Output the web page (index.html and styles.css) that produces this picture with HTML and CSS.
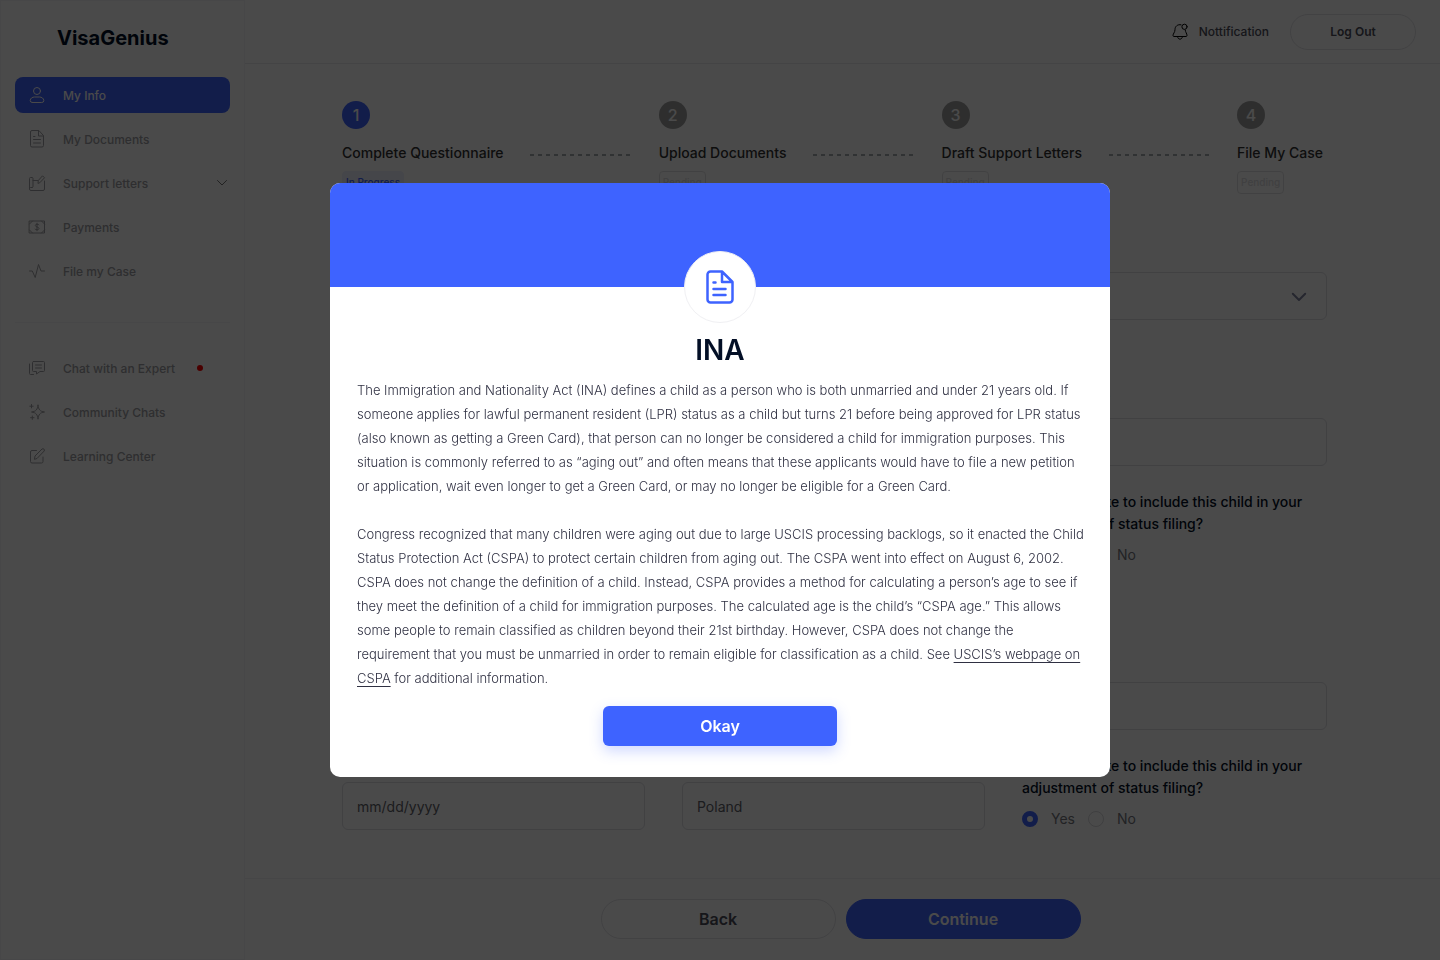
FILE: index.html
```html
<!DOCTYPE html>
<html lang="en">
<head>
<meta charset="utf-8">
<meta name="viewport" content="width=device-width, initial-scale=1">
<title>VisaGenius</title>
<link rel="stylesheet" href="styles.css">
</head>
<body>
<div class="app">
  <aside class="sidebar">
    <div class="brand">VisaGenius</div>
    <nav class="nav">
      <a class="nav-item active" href="#"><svg class="icon" viewBox="0 0 16 16"><circle cx="8" cy="4" r="3.5"/><path d="M3.3 15.5h9.4a2 2 0 0 0 2.1-2c0-2.200-2.300-3.500-4.300-3.500h-5C3.500 10 1.200 11.300 1.200 13.500a2 2 0 0 0 2.100 2z"/></svg>My Info</a>
      <a class="nav-item" href="#"><svg class="icon" viewBox="0 0 16 16"><path d="M9.500-.5H3A1.500 1.500 0 0 0 1.500 1v13.500A1.500 1.500 0 0 0 3 16h10a1.500 1.500 0 0 0 1.500-1.500V5zM9.500-.5V5h5M4.500 5.500h1.500M4.500 8.500h7M4.500 12h7"/></svg>My Documents</a>
      <a class="nav-item" href="#"><svg class="icon" viewBox="0 0 16 16"><path d="M3 12.500H1.500a1 1 0 0 1-1-1V3.500a1 1 0 0 1 1-1H3a1 1 0 0 1 1 1v8a1 1 0 0 1-1 1zM.5 11.500V14A1.500 1.500 0 0 0 2 15.500h12a1.500 1.500 0 0 0 1.500-1.500V6M4 5.500h5M9 8l.3-2.500L13.500.8l2 2-4.500 4.700z"/></svg>Support letters<svg class="chevron" viewBox="0 0 10 6"><path d="M.5.5 5 5 9.500.5"/></svg></a>
      <a class="nav-item" href="#"><svg class="icon" viewBox="0 0 16 16"><path d="M.5 2h15v12H.5zM.5 5 3.500 2M12.500 2l3 3M.5 11l3 3M12.500 14l3-3M10 5.800C9.500 5 6.300 4.800 6.300 6.500S10 7.800 10 9.500 6.500 11 6 10.200M8 4.200v7.600"/></svg>Payments</a>
      <a class="nav-item" href="#"><svg class="icon" viewBox="0 0 16 16"><path d="M.5 8h2.800l2.900 6.500L9.500 1.500l2.500 6.500h3.500"/></svg>File my Case</a>
    </nav>
    <hr class="divider">
    <nav class="nav">
      <a class="nav-item" href="#"><svg class="icon" viewBox="0 0 16 16"><path d="M4.500 1.500h10a1 1 0 0 1 1 1v8a1 1 0 0 1-1 1H11L7.500 14v-2.500h-3a1 1 0 0 1-1-1v-8a1 1 0 0 1 1-1zM.5 4v9.500a1 1 0 0 0 1 1h3M6.500 5h6M6.500 8h6"/></svg>Chat with an Expert<span class="dot"></span></a>
      <a class="nav-item" href="#"><svg class="icon" viewBox="0 0 16 16"><path d="M9 1.200C9.500 5.500 11 7.500 15.500 8 11 8.500 9.500 10.500 9 15.200 8.500 10.500 7 8.500 2.500 8 7 7.500 8.500 5.500 9 1.200zM2.500.5v3.400M.8 2.200h3.400M3.300 12v3.400M1.600 13.700H5"/></svg>Community Chats</a>
      <a class="nav-item" href="#"><svg class="icon" viewBox="0 0 16 16"><path d="M7.500 2.500H3A1.500 1.500 0 0 0 1.500 4v9.500A1.500 1.500 0 0 0 3 15h9.500a1.500 1.500 0 0 0 1.500-1.500V9M5.500 11l.5-3L13 1c1.300-1 3.200.7 2.200 2L8.300 10.200z"/></svg>Learning Center</a>
    </nav>
  </aside>

  <div class="page">
    <header class="topbar">
      <a class="notify" href="#"><svg class="bell" viewBox="0 0 16 18"><path d="M9 1.800C5.500 1 3 3.500 3 6.500 3 9.500 1 10.500 1 12.500c0 .700.500 1 1 1h12c.500 0 1-.300 1-1 0-2-1.500-3-1.800-5.500M5.500 13.500c.3 3.700 4.700 3.700 5 0"/><circle cx="12.500" cy="3.800" r="2.600"/></svg>Nottification</a>
      <button class="logout" type="button">Log Out</button>
    </header>

    <main class="content">
      <ol class="steps">
        <li class="step current"><span class="num">1</span><span class="step-name">Complete Questionnaire</span><span class="badge">In Progress</span></li>
        <li class="link"></li>
        <li class="step"><span class="num">2</span><span class="step-name">Upload Documents</span><span class="badge">Pending</span></li>
        <li class="link"></li>
        <li class="step"><span class="num">3</span><span class="step-name">Draft Support Letters</span><span class="badge">Pending</span></li>
        <li class="link"></li>
        <li class="step"><span class="num">4</span><span class="step-name">File My Case</span><span class="badge">Pending</span></li>
      </ol>

      <form class="form">
        <div class="field">
          <label class="label" for="count">Number of children</label>
          <div class="select-wrap">
            <select class="input" id="count"><option>2</option></select>
            <svg class="select-arrow" viewBox="0 0 14 8"><path d="M.8.8 7 7 13.200.8"/></svg>
          </div>
        </div>

        <fieldset class="child">
          <legend class="legend">Child 1</legend>
          <div class="field"><label class="label" for="f1">First Name</label><input class="input" id="f1"></div>
          <div class="field"><label class="label" for="m1">Last Name</label><input class="input" id="m1"></div>
          <div class="field"><label class="label" for="l1">Middle Name</label><input class="input" id="l1"></div>
          <div class="field"><label class="label" for="d1">Date of Birth</label><input class="input" id="d1" placeholder="mm/dd/yyyy"></div>
          <div class="field"><label class="label" for="c1">Country of Birth</label><input class="input" id="c1" placeholder="Poland"></div>
          <div class="question" role="radiogroup" aria-labelledby="q1">
            <span class="label" id="q1">Would you like to include this child in your adjustment of status filing?</span>
            <div class="choices"><label class="choice"><input class="radio" type="radio" name="include1" checked>Yes</label><label class="choice"><input class="radio" type="radio" name="include1">No</label></div>
          </div>
        </fieldset>

        <fieldset class="child">
          <legend class="legend">Child 2</legend>
          <div class="field"><label class="label" for="f2">First Name</label><input class="input" id="f2"></div>
          <div class="field"><label class="label" for="m2">Last Name</label><input class="input" id="m2"></div>
          <div class="field"><label class="label" for="l2">Middle Name</label><input class="input" id="l2"></div>
          <div class="field"><label class="label" for="d2">Date of Birth</label><input class="input" id="d2" placeholder="mm/dd/yyyy"></div>
          <div class="field"><label class="label" for="c2">Country of Birth</label><input class="input" id="c2" placeholder="Poland"></div>
          <div class="question" role="radiogroup" aria-labelledby="q2">
            <span class="label" id="q2">Would you like to include this child in your adjustment of status filing?</span>
            <div class="choices"><label class="choice"><input class="radio" type="radio" name="include2" checked>Yes</label><label class="choice"><input class="radio" type="radio" name="include2">No</label></div>
          </div>
        </fieldset>
      </form>
    </main>

    <footer class="footer">
      <button class="pill" type="button">Back</button>
      <button class="pill primary" type="button">Continue</button>
    </footer>
  </div>
</div>

<div class="overlay">
  <section class="dialog" role="dialog" aria-modal="true" aria-labelledby="dialog-title">
    <div class="dialog-banner">
      <span class="dialog-badge"><svg class="dialog-icon" viewBox="0 0 28 34"><path d="M16 1.500H4.500a3 3 0 0 0-3 3v25a3 3 0 0 0 3 3h19a3 3 0 0 0 3-3V12zM16 1.500V12h10.500M7.500 12.500h2M7.500 19h12M7.500 25h12"/></svg></span>
    </div>
    <div class="dialog-body">
      <h1 class="dialog-title" id="dialog-title">INA</h1>
      <div class="copy">
        <p class="text">The Immigration and Nationality Act (INA) defines a child as a person who is both unmarried and under 21 years old. If someone applies for lawful permanent resident (LPR) status as a child but turns 21 before being approved for LPR status (also known as getting a Green Card), that person can no longer be considered a child for immigration purposes. This situation is commonly referred to as “aging out” and often means that these applicants would have to file a new petition or application, wait even longer to get a Green Card, or may no longer be eligible for a Green Card.</p>
        <p class="text">Congress recognized that many children were aging out due to large USCIS processing backlogs, so it enacted the Child Status Protection Act (CSPA) to protect certain children from aging out. The CSPA went into effect on August 6, 2002. CSPA does not change the definition of a child. Instead, CSPA provides a method for calculating a person’s age to see if they meet the definition of a child for immigration purposes. The calculated age is the child’s “CSPA age.” This allows some people to remain classified as children beyond their 21st birthday. However, CSPA does not change the requirement that you must be unmarried in order to remain eligible for classification as a child. See <a class="text-link" href="#">USCIS’s webpage on CSPA</a> for additional information.</p>
      </div>
      <button class="okay" type="button">Okay</button>
    </div>
  </section>
</div>
</body>
</html>
```
FILE: styles.css
```css
* { box-sizing: border-box; }
body { margin: 0; font-family: Inter, "Liberation Sans", sans-serif; color: #030f26; background: #fff; }
button, input, select { font-family: inherit; }
svg { fill: none; stroke: currentColor; stroke-linecap: round; stroke-linejoin: round; flex: none; overflow: visible; }

.app { display: flex; min-height: 100vh; }
.sidebar { width: 245px; flex: none; padding: 20px 14px; border: 1px solid #f3f3f6; }
.brand { margin: 0 0 21px 42px; font-size: 20px; line-height: 35px; font-weight: 700; }
.nav { display: flex; flex-direction: column; gap: 8px; }
.nav-item { display: flex; align-items: center; height: 36px; padding: 0 3px 0 14px; border-radius: 8px; color: #a0a0a4; font-size: 12px; font-weight: 500; text-decoration: none; }
.nav-item.active { background: #3e63ff; color: #fff; }
.icon { width: 16px; height: 16px; margin-right: 18px; }
.chevron { width: 10px; height: 6px; margin-left: auto; stroke: #777; }
.dot { width: 6px; height: 6px; margin-left: 22px; border-radius: 50%; background: #f00; }
.divider { height: 1px; margin: 33px 0 27px; border: 0; background: #f3f3f6; }

.page { flex: 1; min-width: 0; display: flex; flex-direction: column; }
.topbar { display: flex; align-items: center; justify-content: flex-end; gap: 21px; height: 64px; padding-right: 24px; border-bottom: 1px solid #eaeaee; }
.notify { display: flex; align-items: center; gap: 11px; color: #4c4d59; font-size: 12px; font-weight: 500; text-decoration: none; }
.bell { width: 16px; height: 18px; color: #000; }
.logout { width: 126px; height: 36px; border: 1px solid #e2e2e6; border-radius: 18px; background: #fff; color: #4c4d59; font-size: 12px; font-weight: 600; }

.content { flex: 1; padding: 37px 113px 0 97px; }
.steps { display: flex; justify-content: space-between; margin: 0; padding: 0 4px 0 0; list-style: none; }
.step { display: flex; flex-direction: column; align-items: flex-start; }
.num { width: 28px; height: 28px; border-radius: 50%; background: #a0a0a0; color: #fff; font-size: 16px; line-height: 28px; font-weight: 500; text-align: center; }
.current .num { background: #3e63ff; }
.step-name { margin-top: 13px; font-size: 14px; line-height: 22px; font-weight: 500; color: #333; }
.badge { margin-top: 7px; padding: 0 3px; border: 1px solid #e0e0e4; border-radius: 4px; font-size: 10px; line-height: 21px; font-weight: 500; color: #dcdce0; }
.current .badge { border-color: #eceffd; background: #eceffd; color: #3e63ff; }
.link { width: 102px; height: 2px; margin-top: 53px; background: repeating-linear-gradient(90deg, #a6acb0 0 4px, transparent 4px 8px); }

.form { display: flex; flex-direction: column; }
.field { display: flex; flex-direction: column; }
.form > .field { margin-top: 45px; }
.label { font-size: 14px; line-height: 22px; font-weight: 500; }
.field .label { margin-bottom: 11px; }
.input { width: 100%; height: 48px; padding: 0 14px; border: 1px solid #dedee3; border-radius: 6px; background: #fff; color: #5f6168; font-size: 14px; appearance: none; }
.input::placeholder { color: #5f6168; opacity: 1; }
.select-wrap { position: relative; }
.select-arrow { position: absolute; right: 21px; top: 21px; width: 14px; height: 8px; color: #8084a0; stroke-width: 2; }
.child { display: grid; grid-template-columns: 303fr 303fr 305fr; gap: 19px 37px; margin: 0; padding: 0; border: 0; }
.child + .child { margin-top: 18px; }
.legend { padding: 24px 0 19px; font-size: 16px; line-height: 22px; font-weight: 600; }
.question { padding-top: 6px; }
.question .label { display: block; }
.choices { display: flex; gap: 13px; margin-top: 9px; }
.choice { display: flex; align-items: center; gap: 13px; font-size: 14px; line-height: 22px; color: #75777e; }
.radio { appearance: none; width: 16px; height: 16px; margin: 0; border: 1px solid #d8d8dc; border-radius: 50%; background: #fff; }
.radio:checked { border: 5px solid #3e63ff; }

.footer { display: flex; align-items: center; justify-content: center; gap: 10px; height: 82px; padding: 0 4px 2px 0; border-top: 1px solid #f0f0f3; }
.pill { width: 235px; height: 40px; border: 1px solid #e2e2e6; border-radius: 20px; background: #fff; color: #4c4d59; font-size: 16px; font-weight: 600; }
.pill.primary { border-color: #3e63ff; background: #3e63ff; color: #fff; }

.overlay { position: fixed; inset: 0; display: flex; align-items: center; justify-content: center; background: rgba(0, 0, 0, .71); }
.dialog { width: 780px; max-width: 100%; border-radius: 10px; overflow: hidden; background: #fff; }
.dialog-banner { display: flex; align-items: flex-end; justify-content: center; height: 104px; background: #3e63ff; }
.dialog-badge { display: flex; align-items: center; justify-content: center; flex: none; width: 72px; height: 72px; margin-bottom: -36px; border: 1px solid #f0f0f3; border-radius: 50%; background: #fff; }
.dialog-icon { width: 28px; height: 34px; color: #3e63ff; stroke-width: 2.5; }
.dialog-body { display: flex; flex-direction: column; align-items: center; padding: 44px 0 31px; }
.dialog-title { margin: 0 0 9px; font-size: 28px; line-height: 38px; font-weight: 600; }
.copy { display: flex; flex-direction: column; gap: 24px; padding: 0 22px 16px 27px; }
.text { margin: 0; font-size: 13px; line-height: 24px; font-weight: 300; color: #2f3042; }
.text-link { color: inherit; text-underline-offset: 3px; }
.okay { width: 234px; height: 40px; border: 0; border-radius: 6px; background: #3e63ff; color: #fff; font-size: 16px; font-weight: 600; box-shadow: 0 5px 14px rgba(62, 99, 255, .25); }
```
